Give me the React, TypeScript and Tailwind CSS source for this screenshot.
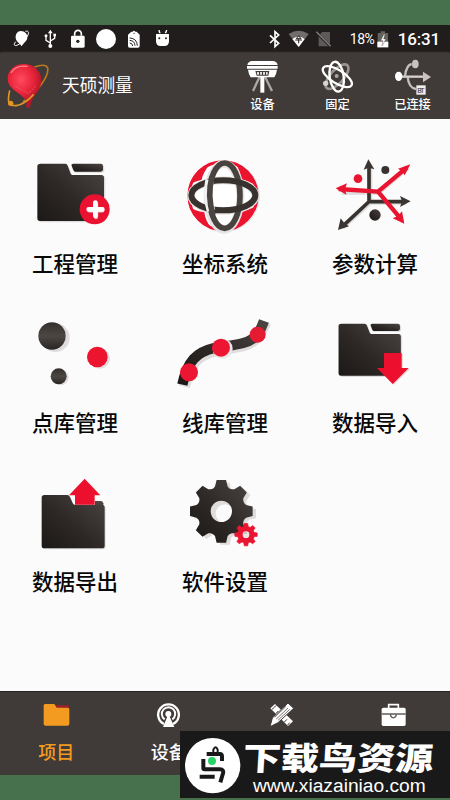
import type { ReactNode } from 'react';

type ArtProps = { box: string; w: number; h: number; className?: string; children: ReactNode };

function Art({ box, w, h, className, children }: ArtProps) {
  return (
    <svg viewBox={box} width={w} height={h} className={`block shrink-0 ${className ?? ''}`} fill="none">
      {children}
    </svg>
  );
}

function Gradients() {
  return (
    <svg width="0" height="0" className="absolute">
      <defs>
        <linearGradient id="dark" x1="0" y1="1" x2="1" y2="0">
          <stop offset="0" stopColor="#1b1817" />
          <stop offset="0.45" stopColor="#2d2826" />
          <stop offset="1" stopColor="#4b4542" />
        </linearGradient>
        <linearGradient id="ball" x1="0" y1="0" x2="0" y2="1">
          <stop offset="0" stopColor="#35302d" />
          <stop offset="0.5" stopColor="#4d4744" />
          <stop offset="1" stopColor="#292523" />
        </linearGradient>
        <radialGradient id="pin" cx="0.4" cy="0.4" r="0.7">
          <stop offset="0" stopColor="#ff4a60" />
          <stop offset="0.5" stopColor="#e9253b" />
          <stop offset="1" stopColor="#a5121f" />
        </radialGradient>
      </defs>
    </svg>
  );
}

function gearPath(cx: number, cy: number, outer: number, inner: number, hole: number) {
  const pts: string[] = [];
  for (let i = 0; i < 8; i++) {
    const a = (i * Math.PI) / 4 - Math.PI / 2;
    const steps: [number, number][] = [
      [-0.34, inner],
      [-0.25, inner * 1.05],
      [-0.15, outer],
      [0.15, outer],
      [0.25, inner * 1.05],
      [0.34, inner],
    ];
    for (const [d, r] of steps) {
      pts.push(`${(cx + r * Math.cos(a + d)).toFixed(1)} ${(cy + r * Math.sin(a + d)).toFixed(1)}`);
    }
  }
  return `M${pts.join('L')}ZM${cx - hole} ${cy}a${hole} ${hole} 0 1 0 ${hole * 2} 0a${hole} ${hole} 0 1 0 ${-hole * 2} 0Z`;
}

function Folder() {
  return (
    <>
      <path d="M62 58h76q5 0 8 6l9 24q2 4 6 4h87q8 0 8 8v124q0 8-8 8H64q-8 0-8-8V66q0-8 6-8Z" fill="#dedcdc" />
      <path d="M62 56h74q5 0 7 6l9 24q2 4 6 4h86q8 0 8 8v122q0 8-8 8H60q-8 0-8-8V64q0-8 10-8Z" fill="url(#dark)" />
      <path d="M160 60h86q7 0 7 7v9q0 7-7 7h-80q-4 0-6-6l-5-12q-1-5 5-5Z" fill="#dedcdc" />
      <path d="M160 56h82q7 0 7 7v10q0 7-7 7h-76q-4 0-6-5l-5-13q-2-6 5-6Z" fill="url(#dark)" />
    </>
  );
}

function ProjectArt() {
  return (
    <>
      <Folder />
      <circle cx="224" cy="193" r="45" fill="#eb1231" />
      <path d="M228 175v41M208 196h39" stroke="#dfc7ca" strokeWidth="13" strokeLinecap="round" />
      <path d="M226 173v39M206 193h41" stroke="#fff" strokeWidth="14" strokeLinecap="round" />
    </>
  );
}

function CoordArt() {
  return (
    <>
      <circle cx="163" cy="154" r="105" stroke="#dededf" strokeWidth="3" />
      <circle cx="159" cy="152" r="102" fill="#fff" stroke="#eb1530" strokeWidth="9" />
      <path d="M59 120A106 106 0 0 1 123 53Q98 83 95 104Q75 108 59 120ZM196 55Q239 72 258 122Q236 107 215 104Q212 80 196 55ZM58 186Q75 198 103 202Q107 231 125 249Q78 231 58 186ZM213 199Q240 195 260 182Q243 235 194 252Q209 231 213 199Z" fill="#eb1530" />
      <ellipse cx="162" cy="155" rx="49" ry="99" stroke="#e5e3e3" strokeWidth="24" />
      <ellipse cx="160" cy="152" rx="96" ry="46" stroke="#e5e3e3" strokeWidth="23" />
      <ellipse cx="164" cy="152" rx="46" ry="98" stroke="#494340" strokeWidth="17" />
      <ellipse cx="160" cy="151" rx="96" ry="45" stroke="#38322f" strokeWidth="18" />
      <path d="M119 105Q109 151 123 197" stroke="#f2f1f1" strokeWidth="26" />
      <path d="M126 95Q111 151 129 210" stroke="#4a4542" strokeWidth="17" />
    </>
  );
}

function ParamArt() {
  return (
    <>
      <g transform="translate(3 3)" stroke="#dcdada" strokeWidth="12">
        <path d="M148 170V62M148 170H255M148 170L65 245M174 140L262 65M174 140L245 226M174 140H62" />
      </g>
      <g stroke="#38332f" strokeWidth="11">
        <path d="M147 172V65M145 170H250M149 168L70 242" />
      </g>
      <path d="M145 43L163 73L147 68L131 74ZM272 169L240 186L246 169L240 153ZM54 255L62 220L73 234L87 244Z" fill="#3b3633" />
      <path d="M56 132L174 140L260 68M174 140L242 221" stroke="#e9142f" strokeWidth="13" strokeLinejoin="round" />
      <path d="M47 130L81 115L75 131L79 149ZM271 58L254 91L247 80L234 71ZM253 236L218 220L234 213L246 199Z" fill="#ea1430" />
      <circle cx="114" cy="101" r="13" fill="#e9142f" />
      <circle cx="196" cy="75" r="12" fill="#38332f" />
      <circle cx="165" cy="210" r="17" fill="url(#dark)" />
    </>
  );
}

function PointArt() {
  return (
    <>
      <circle cx="106" cy="98" r="43" fill="#dfdddd" />
      <circle cx="96" cy="93" r="41" fill="url(#ball)" />
      <circle cx="239" cy="160" r="31" fill="#dfdddd" />
      <circle cx="232" cy="156" r="31" fill="#ed1430" />
      <circle cx="122" cy="217" r="24" fill="#dfdddd" />
      <circle cx="116" cy="214" r="24" fill="url(#ball)" />
    </>
  );
}

function LineArt() {
  return (
    <>
      <path d="M43 245C61 170 85 150 135 137C186 127 238 127 263 96Q276 76 287 52" stroke="#dedcdc" strokeWidth="34" />
      <path d="M37 239C52 168 80 141 133 129C184 119 232 121 259 92Q274 72 282 48" stroke="url(#dark)" strokeWidth="31" />
      <circle cx="158" cy="131" r="30" fill="#e8e6e6" />
      <circle cx="57" cy="202" r="27" fill="#ed1632" />
      <circle cx="153" cy="128" r="27" fill="#ed1632" />
      <circle cx="263" cy="89" r="24" fill="#e51b32" />
    </>
  );
}

function ImportArt() {
  return (
    <>
      <g transform="translate(7 5) scale(.935 .91)"><Folder /></g>
      <path d="M195 147H248V192H269L221 239L180 194H195Z" fill="#dfc8ca" />
      <path d="M192 144H245V189H266L218 237L171 189H192Z" fill="#ed102e" />
    </>
  );
}

function ExportArt() {
  return (
    <>
      <path d="M225 108h17q6 0 8 7v14h-25Z" fill="#4b4542" />
      <path d="M76 93h67q5 0 8 6l8 19q2 5 6 5h84q8 0 8 8v115q0 7-7 7H77q-8 0-8-8V99Z" fill="#dedcdc" />
      <path d="M73 90h69q5 0 8 6l8 18q2 5 6 5h82q8 0 8 8v115q0 8-8 8H73q-8 0-8-8V98q0-8 8-8Z" fill="url(#dark)" />
      <path d="M165 119V91H147L194 41L241 91H224V119Z" fill="#ed102e" />
    </>
  );
}

function SettingsArt() {
  return (
    <>
      <path transform="translate(10 7)" d={gearPath(155, 139, 94, 71, 28)} fill="#dedcdc" fillRule="evenodd" />
      <path d={gearPath(154, 139, 95, 73, 32)} fill="url(#dark)" fillRule="evenodd" />
      <path d={gearPath(228, 209, 34, 25, 9)} fill="#ea1530" fillRule="evenodd" stroke="#ea1530" strokeWidth="2" />
      <circle cx="228" cy="209" r="10" fill="#eee5e5" />
      <path d="M221 206l6-4 2 5" stroke="#aaa" strokeWidth="3" />
    </>
  );
}

const tiles = [
  { label: '工程管理', box: '0 0 330 300', art: <ProjectArt /> },
  { label: '坐标系统', box: '0 0 330 300', art: <CoordArt /> },
  { label: '参数计算', box: '0 0 330 300', art: <ParamArt /> },
  { label: '点库管理', box: '0 -3 330 300', art: <PointArt /> },
  { label: '线库管理', box: '0 -3 330 300', art: <LineArt /> },
  { label: '数据导入', box: '0 -3 330 300', art: <ImportArt /> },
  { label: '数据导出', box: '0 -6 330 300', art: <ExportArt /> },
  { label: '软件设置', box: '0 -6 330 300', art: <SettingsArt /> },
];

function StatusBar() {
  return (
    <div className="flex h-7 items-center justify-between bg-[#201d1c] text-white">
      <Art box="0 30 540 84" w={180} h={28}>
        <path d="M62 48c13 0 21 9 20 20-1 10-10 14-15 23q-3 4-5-1c-3-6-14-10-15-22-1-10 6-20 15-20Z" fill="#fff" />
        <path d="M76 49c15-4 10 12-1 24S45 97 43 89q0-5 4-9" stroke="#fff" strokeWidth="3" />
        <path d="M151 91V51M151 84l-13-8V62M151 78l13-8V59" stroke="#fff" strokeWidth="4" />
        <path d="M151 44l7 11h-14Z" fill="#fff" />
        <circle cx="151" cy="93" r="6" fill="#fff" />
        <circle cx="138" cy="62" r="4.500" fill="#fff" />
        <path d="M160 56h8v8h-8z" fill="#fff" />
        <path d="M224 62v-6a10 10 0 0 1 20 0v6" stroke="#fff" strokeWidth="5" />
        <rect x="213" y="62" width="41" height="36" rx="4" fill="#fff" />
        <circle cx="233.500" cy="79" r="5" fill="#222" />
        <circle cx="318" cy="72" r="30" fill="#fff" />
        <path d="M394 50h4q4-5 8 0h4l9 9v34q0 5-5 5h-25q-5 0-5-5V59Z" fill="#fff" />
        <circle cx="402" cy="55" r="2" fill="#222" />
        <path d="M389 69q22 1 23 23M389 76q15 1 16 16M389 84q8 0 9 9" stroke="#222" strokeWidth="3" />
        <path d="M468 57h39v22q0 14-14 14h-11q-14 0-14-14ZM475 45h4l3 10h-5ZM498 45h4l-3 10h-5Z" fill="#fff" />
        <circle cx="478" cy="70" r="3" fill="#222" /><circle cx="498" cy="70" r="3" fill="#222" />
      </Art>
      <div className="flex h-7 items-center pr-[10px] font-[Roboto,sans-serif]">
        <Art box="135 30 237 84" w={79} h={28}>
          <path d="M138 61l26 24-11 10V50l11 10-26 24" stroke="#fff" strokeWidth="5" />
          <path d="M194 57Q224 38 254 57L224 96Z" fill="#706d6c" />
          <path d="M205 72Q224 57 242 72L224 96Z" fill="#fff" />
          <path d="M224 62l7 9h-14ZM214 75h20M224 73v12" stroke="#222" strokeWidth="3" />
          <path d="M294 51h24v43h-34V63Z" fill="#5d5a59" />
          <path d="M277 52l43 43" stroke="#201d1c" strokeWidth="8" />
          <path d="M277 50l43 44" stroke="#85817f" strokeWidth="4" />
        </Art>
        <span className="ml-[2px] w-[27px] whitespace-nowrap text-[14px] tracking-[-0.6px]">18%</span>
        <Art box="461 45 36 51" w={12} h={17}>
          <path d="M463 51h9v-5h13v5h9v43h-31Z" fill="#65615f" />
          <path d="M462 77h33v17h-33Z" fill="#fff" />
          <path d="M482 54l-10 20h7l-3 16 12-21h-7l4-15Z" fill="#fff" stroke="#38332f" strokeWidth="1" />
        </Art>
        <span className="ml-[9px] text-[17px] font-medium leading-none tracking-[-0.2px]">16:31</span>
      </div>
    </div>
  );
}

const links = [
  {
    label: '设备',
    art: (
      <>
        <path d="M105 184L84 229M119 184l22 45" stroke="#aaa6a4" strokeWidth="7" />
        <path d="M112 183v51" stroke="#fff" strokeWidth="12" />
        <path d="M82 139h61q13 1 15 12H67q2-11 15-12ZM66 154h92v8H66ZM69 165h87q-2 15-8 23H77q-6-8-8-23Z" fill="#fff" />
        <path d="M91 169h42l-3 14H95Z" fill="#403a38" />
        <path d="M96 172h6v8h-6zM105 172h6v8h-6zM114 172h6v8h-6zM123 172h5v8h-5z" fill="#ddd" />
      </>
    ),
    box: '0 130 225 111',
  },
  {
    label: '固定',
    art: (
      <>
        <ellipse cx="336" cy="186" rx="20" ry="46" stroke="#9a9593" strokeWidth="8" transform="rotate(42 336 186)" />
        <ellipse cx="335" cy="186" rx="21" ry="45" stroke="#fff" strokeWidth="7" transform="rotate(-8 335 186)" />
        <ellipse cx="337" cy="186" rx="20" ry="50" stroke="#fff" strokeWidth="7" transform="rotate(-58 337 186)" />
        <circle cx="335" cy="184" r="6" fill="#a9a5a3" />
        <circle cx="302" cy="206" r="8" fill="#d8d4d3" />
      </>
    ),
    box: '225 130 225 111',
  },
  {
    label: '已连接',
    art: (
      <>
        <path d="M520 186h82" stroke="#d6d1cf" strokeWidth="7" />
        <path d="M540 185q4-35 20-37M548 187q3 33 25 36" stroke="#c5c0be" strokeWidth="7" />
        <path d="M594 171l24 16-24 16Z" fill="#c8c3c1" />
        <ellipse cx="521" cy="185" rx="11" ry="14" fill="#fff" />
        <ellipse cx="571" cy="148" rx="10" ry="13" fill="#c8c3c1" />
        <rect x="574" y="212" width="28" height="28" fill="#eee" />
        <text x="577" y="235" fontSize="22" fill="#343130" fontFamily="Roboto, sans-serif" textLength="22">BT</text>
      </>
    ),
    box: '450 130 225 111',
  },
];

function Header() {
  return (
    <header className="flex h-[66px] items-start bg-[#403a38] text-white shadow-[0_1px_3px_#aaa]">
      <Art box="21 114 126 180" w={42} h={60} className="ml-[7px]">
        <path d="M103 156q34-12 40 3c5 26-36 78-74 101" stroke="#b9791d" strokeWidth="5" />
        <path d="M80 259q8-6 15 0l-6 18q-6 5-10-1Z" fill="#bc1729" />
        <path d="M72 147c31 0 52 22 52 48 0 30-21 40-29 64q-7 10-17 0c-9-24-54-33-55-66-1-28 20-46 49-46Z" fill="url(#pin)" />
        <path d="M34 172q14-22 47-18" stroke="#ff8890" strokeWidth="4" strokeLinecap="round" />
        <path d="M43 213l42 23 25-26" stroke="#ff6a77" strokeWidth="3" strokeDasharray="3 4" />
        <path d="M29 226c-8 36-4 47 20 46 18-3 35-15 52-34" stroke="#dc9528" strokeWidth="5" />
        <circle cx="32" cy="265" r="8" fill="#e59622" />
      </Art>
      <h1 className="ml-[13px] mt-[18px] flex-1 text-[17.700px] font-normal leading-[26px]">天硕测量</h1>
      <nav className="flex">
        {links.map((l) => (
          <div key={l.label} className="flex w-[75px] flex-col items-center pt-[5px]">
            <Art box={l.box} w={75} h={37}>{l.art}</Art>
            <span className="mt-px text-[12.200px] font-medium leading-4">{l.label}</span>
          </div>
        ))}
      </nav>
    </header>
  );
}

const tabs = [
  {
    label: '项目',
    active: true,
    box: '128 66 81 78',
    art: (
      <>
        <path d="M165 76h37q5 0 5 7H165Z" fill="#a32028" />
        <path d="M133 72h29l7 11h33q5 0 5 5v43q0 6-6 6h-65q-6 0-6-6V76Z" fill="#f39b20" />
      </>
    ),
  },
  {
    label: '设备',
    active: false,
    box: '466 66 81 78',
    art: (
      <>
        <path d="M493 132a31 31 0 1 1 27 0" stroke="#fff" strokeWidth="7" />
        <path d="M495 118a20 20 0 1 1 23 0" stroke="#fff" strokeWidth="6" />
        <circle cx="506" cy="102" r="9" fill="#fff" />
        <path d="M505 105h3l16 36h-34Z" fill="#fff" />
      </>
    ),
  },
  {
    label: '测量',
    active: false,
    box: '128 66 81 78',
    art: (
      <>
        <path d="M149 72l54 52-15 14-53-53Z" fill="#fff" />
        <path d="M140 88l8-7M153 76l-5 5M152 100l7-7M177 126l8-8M187 135l6-7" stroke="#403a38" strokeWidth="3" />
        <path d="M188 69l17 16-47 43-24 12 7-26Z" fill="#fff" stroke="#403a38" strokeWidth="3" />
        <path d="M148 112l34-33M153 117l35-33M158 121l35-33" stroke="#777170" strokeWidth="3" />
      </>
    ),
  },
  {
    label: '工具',
    active: false,
    box: '466 66 81 78',
    art: (
      <>
        <path d="M492 87V74h29v13" stroke="#fff" strokeWidth="5" />
        <rect x="471" y="83" width="72" height="55" rx="5" fill="#fff" />
        <path d="M471 102h72M498 103v5q8 11 16 0v-5" stroke="#625c59" strokeWidth="4" />
      </>
    ),
  },
];

function Watermark() {
  return (
    <div className="absolute left-[180px] top-[731px] h-[67px] w-[270px] bg-[#191919] text-white">
      <div className="flex">
        <Art box="540 153 192 201" w={64} h={67}>
          <circle cx="638" cy="257" r="83" fill="#fff" />
          <path d="M640 222v-13q7-14 13 0v13" stroke="#191919" strokeWidth="6" />
          <path d="M610 253v-14M620 222h40q6 0 6 8v13M610 237v28q0 3 4 3h46q12 0 9 12l-8 27M599 290h45" stroke="#191919" strokeWidth="12" />
          <circle cx="636" cy="243" r="12" fill="#28d466" />
        </Art>
        <div className="w-[206px]">
          <div className="ml-[-1px] mt-[7px] h-[37px] w-[160px] origin-left -skew-x-3 scale-x-[1.19] whitespace-nowrap text-[32px] font-black leading-[37px]">
            下载鸟资源
          </div>
          <div className="ml-[9px] mt-[-1px] font-['Liberation_Sans',sans-serif] text-[19.200px] leading-6">www.xiazainiao.com</div>
        </div>
      </div>
    </div>
  );
}

export default function App() {
  return (
    <div className="relative flex h-[800px] w-[450px] flex-col overflow-hidden bg-[#47714c] pt-[25px] font-['Noto_Sans_CJK_SC',sans-serif]">
      <Gradients />
      <StatusBar />
      <Header />
      <main className="grid h-[572px] shrink-0 grid-cols-3 content-start bg-[#fbfbfb] pt-[26px]">
        {tiles.map((t) => (
          <div key={t.label} className="flex h-[159px] flex-col items-center">
            <Art box={t.box} w={110} h={100}>{t.art}</Art>
            <span className="mt-[3px] text-[21.500px] font-medium leading-[30px] text-[#080808]">{t.label}</span>
          </div>
        ))}
      </main>
      <footer className="grid h-[84px] shrink-0 grid-cols-4 border-t border-[#252221] bg-[#403a38] text-white">
        {tabs.map((t) => (
          <div key={t.label} className={`flex flex-col items-center pt-[10px] ${t.active ? 'text-[#f39b20]' : ''}`}>
            <Art box={t.box} w={27} h={26}>{t.art}</Art>
            <span className="mt-[10px] text-[18px] font-medium leading-[26px]">{t.label}</span>
          </div>
        ))}
      </footer>
      <Watermark />
    </div>
  );
}
